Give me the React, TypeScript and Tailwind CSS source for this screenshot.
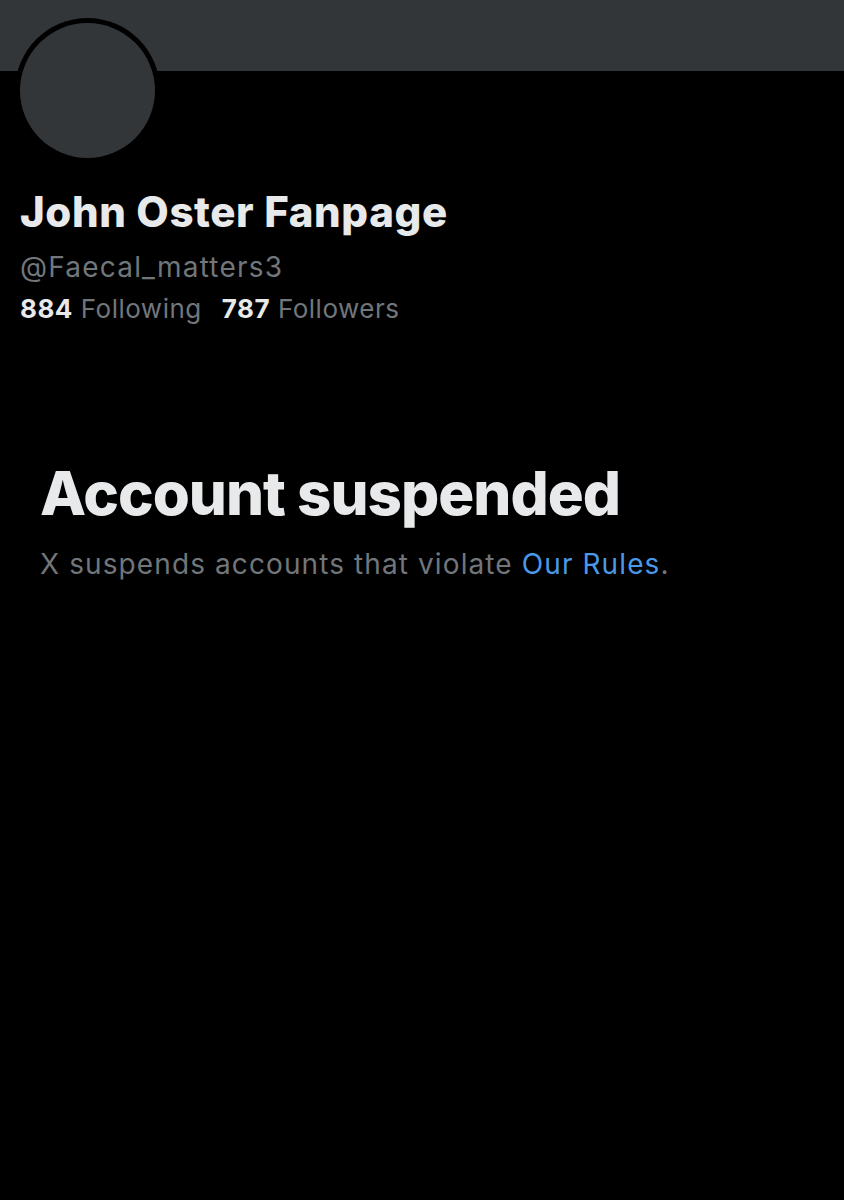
export default function App() {
  return (
    <div className="w-[844px] h-[1200px] bg-black overflow-hidden" style={{ fontFamily: "Inter, 'Liberation Sans', sans-serif" }}>
      <div className="h-[71px] bg-[#333639]" />
      <div className="px-[20px]">
        <div className="-mt-[53px] -ml-[5px] w-[145px] h-[145px] rounded-full bg-black p-[5px]">
          <div className="w-full h-full rounded-full bg-[#333639]" />
        </div>
        <h1 className="mt-[24px] text-[42px] leading-[50px] font-extrabold text-[#e7e9ea] tracking-[0.6px]">John Oster Fanpage</h1>
        <div className="mt-[13px] text-[28px] leading-[34px] text-[#71767b] tracking-[1.2px]">@Faecal_matters3</div>
        <div className="mt-[10px] flex gap-[20px] text-[26px] leading-[30px] tracking-[0.5px]">
          <span><span className="font-bold text-[#e7e9ea]">884</span> <span className="text-[#71767b]">Following</span></span>
          <span><span className="font-bold text-[#e7e9ea]">787</span> <span className="text-[#71767b]">Followers</span></span>
        </div>
      </div>
      <div className="px-[40px] mt-[134px]">
        <h2 className="text-[60px] leading-[70px] font-extrabold text-[#e7e9ea] tracking-[-1px]">Account suspended</h2>
        <p className="mt-[18px] text-[28px] leading-[36px] text-[#71767b] tracking-[1.1px]">
          X suspends accounts that violate <span className="text-[#4a99e9]">Our Rules</span>.
        </p>
      </div>
    </div>
  );
}
